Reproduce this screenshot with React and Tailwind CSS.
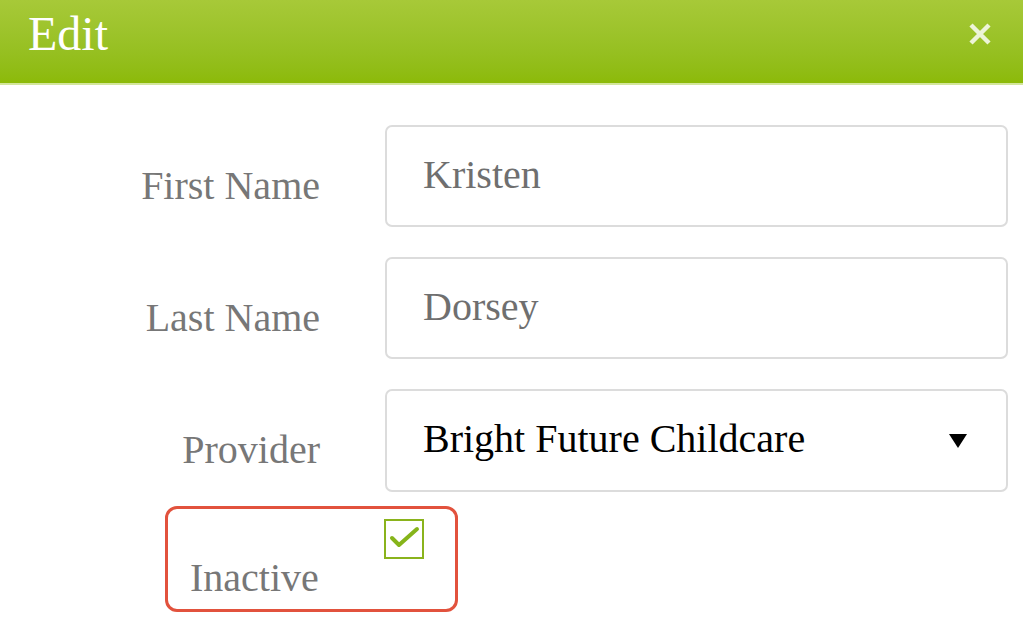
import React from "react";

const serif = { fontFamily: '"Liberation Serif", "Times New Roman", serif' };

function Field({ label, children, mt }) {
  return (
    <div className={`flex items-start ${mt}`}>
      <div className="w-[320px] shrink-0 text-right text-[40px] leading-[40px] text-[#777777] mt-[41px]">
        {label}
      </div>
      <div className="ml-[65px] w-[623px]">{children}</div>
    </div>
  );
}

export default function App() {
  return (
    <div className="w-[1023px] h-[623px] bg-white overflow-hidden" style={serif}>
      <div className="h-[85px] bg-gradient-to-b from-[#a7c938] to-[#8cba08] border-b-2 border-[#d3e69c] flex items-start justify-between pl-[28px] pr-[31px]">
        <div className="text-white text-[48px] leading-[48px] mt-[10px]">Edit</div>
        <svg width="24" height="24" viewBox="0 0 24 24" className="mt-[22px]">
          <path d="M3 3 L21 21 M21 3 L3 21" stroke="rgba(255,255,255,0.82)" strokeWidth="4.5" strokeLinecap="butt" />
        </svg>
      </div>

      <Field label="First Name" mt="mt-[40px]">
        <div className="h-[102px] border-2 border-[#dcdcdc] rounded-[7px] pl-[36px] pt-[28px] text-[40px] leading-[40px] text-[#6f6f6f]">
          Kristen
        </div>
      </Field>
      <Field label="Last Name" mt="mt-[30px]">
        <div className="h-[102px] border-2 border-[#dcdcdc] rounded-[7px] pl-[36px] pt-[28px] text-[40px] leading-[40px] text-[#6f6f6f]">
          Dorsey
        </div>
      </Field>
      <Field label="Provider" mt="mt-[30px]">
        <div className="h-[103px] border-2 border-[#dcdcdc] rounded-[7px] pl-[36px] pr-[39px] pt-[28px] flex items-start justify-between">
          <span className="text-[40px] leading-[40px] text-black">Bright Future Childcare</span>
          <svg width="18" height="14" viewBox="0 0 18 14" className="mt-[15px]">
            <path d="M0 0 L18 0 L9 14 Z" fill="#000" />
          </svg>
        </div>
      </Field>

      <div className="ml-[165px] mt-[14px] w-[293px] h-[106px] border-[3px] border-[#e2523d] rounded-[12px] flex pl-[22px]">
        <div className="self-end mb-[11px] w-[129px] text-[40px] leading-[40px] text-[#777777]">Inactive</div>
        <div className="self-start mt-[10px] ml-[65px] w-[40px] h-[40px] border-[2.5px] border-[#8ab31c] relative">
          <svg width="40" height="40" viewBox="0 0 40 40" className="absolute -left-[2.5px] -top-[2.5px]">
            <path d="M8 19 L15 26 L33 10" stroke="#86b41a" strokeWidth="4" fill="none" strokeLinecap="round" strokeLinejoin="round" />
          </svg>
        </div>
      </div>
    </div>
  );
}
